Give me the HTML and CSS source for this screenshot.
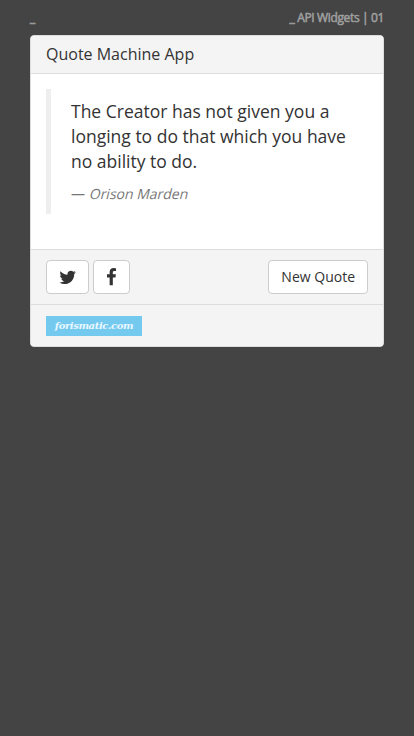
FILE: index.html
```
<!DOCTYPE html>
<html lang="en">
<head>
<meta charset="utf-8">
<title>Quote Machine App</title>
<link rel="stylesheet" href="styles.css">
</head>
<body>
<div class="container">
  <header class="topbar"><span>_</span><span class="series">_ API Widgets | 01</span></header>
  <main class="panel">
    <h1 class="panel-heading">Quote Machine App</h1>
    <div class="panel-body">
      <blockquote class="quote">
        <p>The Creator has not given you a longing to do that which you have no ability to do.</p>
        <footer>— <cite>Orison Marden</cite></footer>
      </blockquote>
    </div>
    <div class="actions">
      <button class="btn" aria-label="Twitter"><svg class="icon-twitter" viewBox="64 0 1664 1792"><path d="M1684 408q-67 98-162 167 1 14 1 42 0 130-38 259.500t-115.500 248.500-184.500 210.500-258 146-323 54.500q-271 0-496-145 35 4 78 4 225 0 401-138-105-2-188-64.500t-114-159.500q33 5 61 5 43 0 85-11-112-23-185.500-111.500t-73.500-205.500v-4q68 38 146 41-66-44-105-115t-39-154q0-88 44-163 121 149 294.500 238.500t371.500 99.500q-8-38-8-74 0-134 94.500-228.500t228.500-94.500q140 0 236 102 109-21 205-78-37 115-142 178 93-10 186-50z"/></svg></button>
      <button class="btn" aria-label="Facebook"><svg class="icon-facebook" viewBox="384 0 1024 1792"><path d="M1343 12v264h-157q-86 0-116 36t-30 108v189h293l-39 296h-254v759h-306v-759h-255v-296h255v-218q0-186 104-288.500t277-102.500q147 0 228 12z"/></svg></button>
      <button class="btn btn-new">New Quote</button>
    </div>
    <div class="credit"><a class="logo">forismatic.com</a></div>
  </main>
</div>
</body>
</html>
```

FILE: styles.css
```
* { box-sizing: border-box; }
body {
  margin: 0;
  min-height: 100vh;
  background: #444;
  color: #333;
  font: 14px/20px "Open Sans", sans-serif;
}
.container { padding: 0 30px; }
.topbar {
  display: flex;
  justify-content: space-between;
  height: 35px;
  padding-top: 8px;
  color: #a0a0a0;
  font-size: 12px;
  -webkit-text-stroke: 0.5px #a0a0a0;
}
.series { letter-spacing: -0.36px; }
.panel {
  height: 312px;
  overflow: hidden;
  background: #fff;
  border: 1px solid #ddd;
  border-radius: 4px;
}
.panel-heading {
  height: 38px;
  margin: 0;
  padding: 9px 15px;
  background: #f4f4f4;
  border-bottom: 1px solid #ddd;
  font-size: 16px;
  font-weight: 400;
  line-height: 18px;
}
.panel-body { padding: 15px 15px 35px; }
.quote {
  height: 125px;
  margin: 0;
  padding: 10px 20px;
  border-left: 5px solid #eee;
}
.quote p {
  margin: 0 0 10px;
  font-size: 17.5px;
  line-height: 25px;
}
.quote footer { color: #777; }
.quote cite {
  display: inline-block;
  margin-left: 1px;
  font-style: normal;
  transform: skewX(-14deg);
}
.actions {
  display: flex;
  gap: 4px;
  height: 55px;
  padding: 10px 15px;
  background: #f4f4f4;
  border-top: 1px solid #ddd;
}
.btn {
  display: flex;
  align-items: center;
  height: 34px;
  padding: 0 12px;
  background: #fff;
  border: 1px solid #ccc;
  border-radius: 4px;
  color: #333;
  font: inherit;
}
.btn svg { height: 18.67px; fill: #333; }
.icon-twitter { width: 17.33px; }
.icon-facebook { width: 10.67px; }
.btn-new { margin-left: auto; }
.credit {
  height: 43px;
  padding: 11px 15px;
  background: #f4f4f4;
  border-top: 1px solid #ddd;
}
.logo {
  display: block;
  width: 96px;
  height: 20px;
  background: #74c9ef;
  color: #e9f8ff;
  font: italic bold 10px/20px "DejaVu Serif", serif;
  letter-spacing: -0.4px;
  text-align: center;
}
```
